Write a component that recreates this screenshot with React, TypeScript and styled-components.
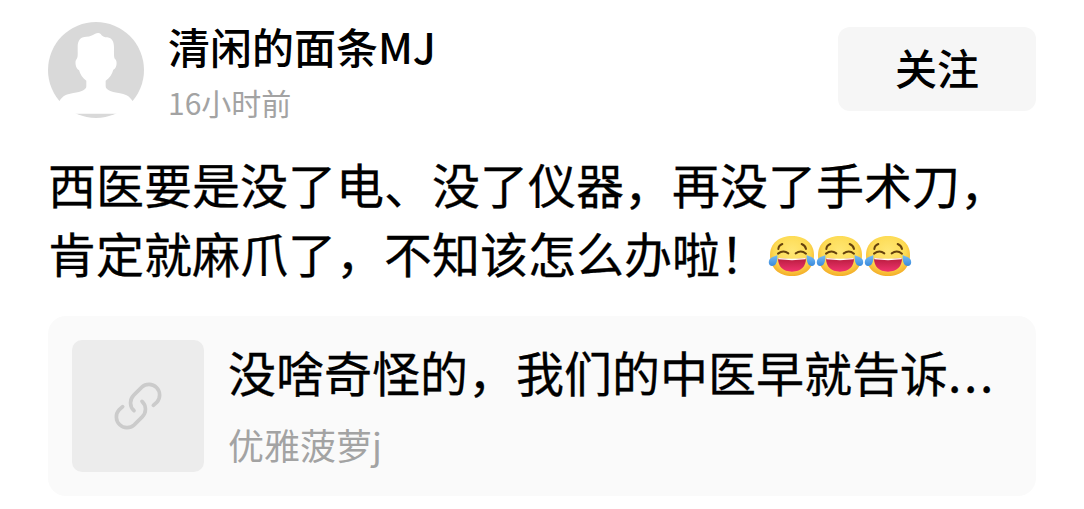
import styled, { createGlobalStyle } from "styled-components"

const App = () => {
  return (
    <>
      <GlobalStyle />
      <Post>
        <Header>
          <Avatar />
          <UserInfo>
            <UserName>清闲的面条MJ</UserName>
            <PostedAt>16小时前</PostedAt>
          </UserInfo>
          <FollowButton type="button">关注</FollowButton>
        </Header>

        <Content>
          <div>西医要是没了电、没了仪器，再没了手术刀，</div>
          <div>
            肯定就麻爪了，不知该怎么办啦！
            <JoyEmoji />
            <JoyEmoji />
            <JoyEmoji />
          </div>
        </Content>

        <LinkCard>
          <Thumbnail>
            <LinkIcon />
          </Thumbnail>
          <LinkBody>
            <LinkTitle>
              没啥奇怪的，我们的中医早就告诉<Dots>...</Dots>
            </LinkTitle>
            <LinkAuthor>优雅菠萝j</LinkAuthor>
          </LinkBody>
        </LinkCard>
      </Post>
    </>
  )
}

export default App

const Avatar = () => (
  <AvatarSvg viewBox="54 34 288 288">
    <circle cx="198" cy="178" r="144" fill="#d9d9d9" />
    <path
      fill="#fff"
      d="M50 309V290L88 272C98 254 112 250 130 247C155 243 169 238 169 226V210C158 202 150 191 147 178C137 175 133 151 140 145C144 141 143 130 143 110C143 88 151 79 169 78C181 78 187 74 194 70C202 66 208 66 212 70C216 77 223 80 232 80C246 82 252 93 252 110C252 130 251 143 256 146C263 153 260 174 250 177C246 190 239 202 227 210V226C227 238 242 243 266 247C286 250 299 256 308 272L350 290V309Z"
    />
  </AvatarSvg>
)

const LinkIcon = () => (
  <LinkSvg viewBox="222 230 144 144" fill="none" stroke="#cbcbcb" strokeWidth="11" strokeLinecap="round">
    <path d="M282 316A32 32 0 0 1 281.400 269.400L305.400 245.400A32 32 0 0 1 350.600 290.600L340 300" />
    <path d="M306 288A32 32 0 0 1 306.600 334.600L282.600 358.600A32 32 0 0 1 237.400 313.400L248 304" />
  </LinkSvg>
)

const JoyEmoji = () => (
  <EmojiSvg viewBox="24 24 144 144">
    <defs>
      <radialGradient id="joyFace" cx="0.5" cy="0.38" r="0.62">
        <stop offset="0" stopColor="#ffe775" />
        <stop offset="0.65" stopColor="#fddb54" />
        <stop offset="1" stopColor="#f4ae28" />
      </radialGradient>
      <linearGradient id="joyMouth" x1="0" y1="0" x2="0" y2="1">
        <stop offset="0" stopColor="#b91d3e" />
        <stop offset="1" stopColor="#f0336f" />
      </linearGradient>
      <linearGradient id="joyTear" x1="0" y1="0" x2="0" y2="1">
        <stop offset="0" stopColor="#79bdf3" />
        <stop offset="1" stopColor="#398add" />
      </linearGradient>
    </defs>
    <path
      fill="url(#joyFace)"
      d="M96 36C133 36 162 57 162 93C162 132 136 156 96 156C56 156 30 132 30 93C30 57 59 36 96 36Z"
    />
    <path fill="url(#joyMouth)" d="M54 103Q96 108 138 103C138 128 123 143 96 143C69 143 54 128 54 103Z" />
    <path fill="#fff" d="M55 102Q96 106 137 102V106Q96 111 55 106Z" />
    <g fill="none" stroke="#65420d" strokeWidth="6" strokeLinecap="round">
      <path d="M55 75Q56 64 67 60" />
      <path d="M125 60Q136 64 138 75" />
      <path d="M54 89Q70 77 85 88" />
      <path d="M107 88Q123 77 138 89" />
    </g>
    <path fill="url(#joyTear)" d="M52 93C53 112 49 126 36 126C26 126 24 114 29 106C34 99 44 97 52 93Z" />
    <path fill="url(#joyTear)" d="M140 93C139 112 143 126 156 126C166 126 168 114 163 106C158 99 148 97 140 93Z" />
  </EmojiSvg>
)

const GlobalStyle = createGlobalStyle`
  body {
    margin: 0;
    background: #fff;
    color: #000;
    font-family: "Noto Sans CJK SC", sans-serif;
  }
`

const Post = styled.article`
  box-sizing: border-box;
  width: 1084px;
  height: 509px;
  padding: 22px 48px 0;
  overflow: hidden;
`
const Header = styled.header`
  display: flex;
  align-items: flex-start;
  height: 127px;
`
const AvatarSvg = styled.svg`
  flex: none;
  width: 96px;
  height: 96px;
`
const UserInfo = styled.div`
  flex: 1;
  padding-left: 24px;
`
const UserName = styled.div`
  height: 50px;
  font-size: 42px;
  font-weight: 500;
  line-height: 47px;
`
const PostedAt = styled.div`
  margin-top: 7px;
  color: #a3a3a3;
  font-size: 30px;
  font-weight: 400;
  line-height: 47px;
`
const FollowButton = styled.button`
  width: 198px;
  height: 84px;
  margin-top: 5px;
  padding: 0 0 4px;
  border: 0;
  border-radius: 12px;
  background: #f6f6f6;
  color: #000;
  font-family: inherit;
  font-size: 42px;
  font-weight: 500;
  line-height: 78px;
`
const Content = styled.div`
  height: 167px;
  font-size: 48px;
  line-height: 69px;
  white-space: nowrap;
  -webkit-text-stroke: 0.3px #000;
`
const EmojiSvg = styled.svg`
  width: 48px;
  height: 48px;
  vertical-align: -7px;
`
const LinkCard = styled.section`
  box-sizing: border-box;
  display: flex;
  width: 988px;
  height: 180px;
  padding: 24px;
  border-radius: 18px;
  background: #fafafa;
`
const Thumbnail = styled.div`
  display: flex;
  flex: none;
  align-items: center;
  justify-content: center;
  width: 132px;
  height: 132px;
  border-radius: 10px;
  background: #ececec;
`
const LinkSvg = styled.svg`
  width: 48px;
  height: 48px;
`
const LinkBody = styled.div`
  padding-left: 24px;
  white-space: nowrap;
`
const LinkTitle = styled.div`
  height: 66px;
  font-size: 48px;
  line-height: 62px;
  -webkit-text-stroke: 0.3px #000;
`
const Dots = styled.span`
  letter-spacing: 2.6px;
`
const LinkAuthor = styled.div`
  margin-top: 12px;
  color: #a3a3a3;
  font-size: 36px;
  font-weight: 400;
  line-height: 53px;
`
